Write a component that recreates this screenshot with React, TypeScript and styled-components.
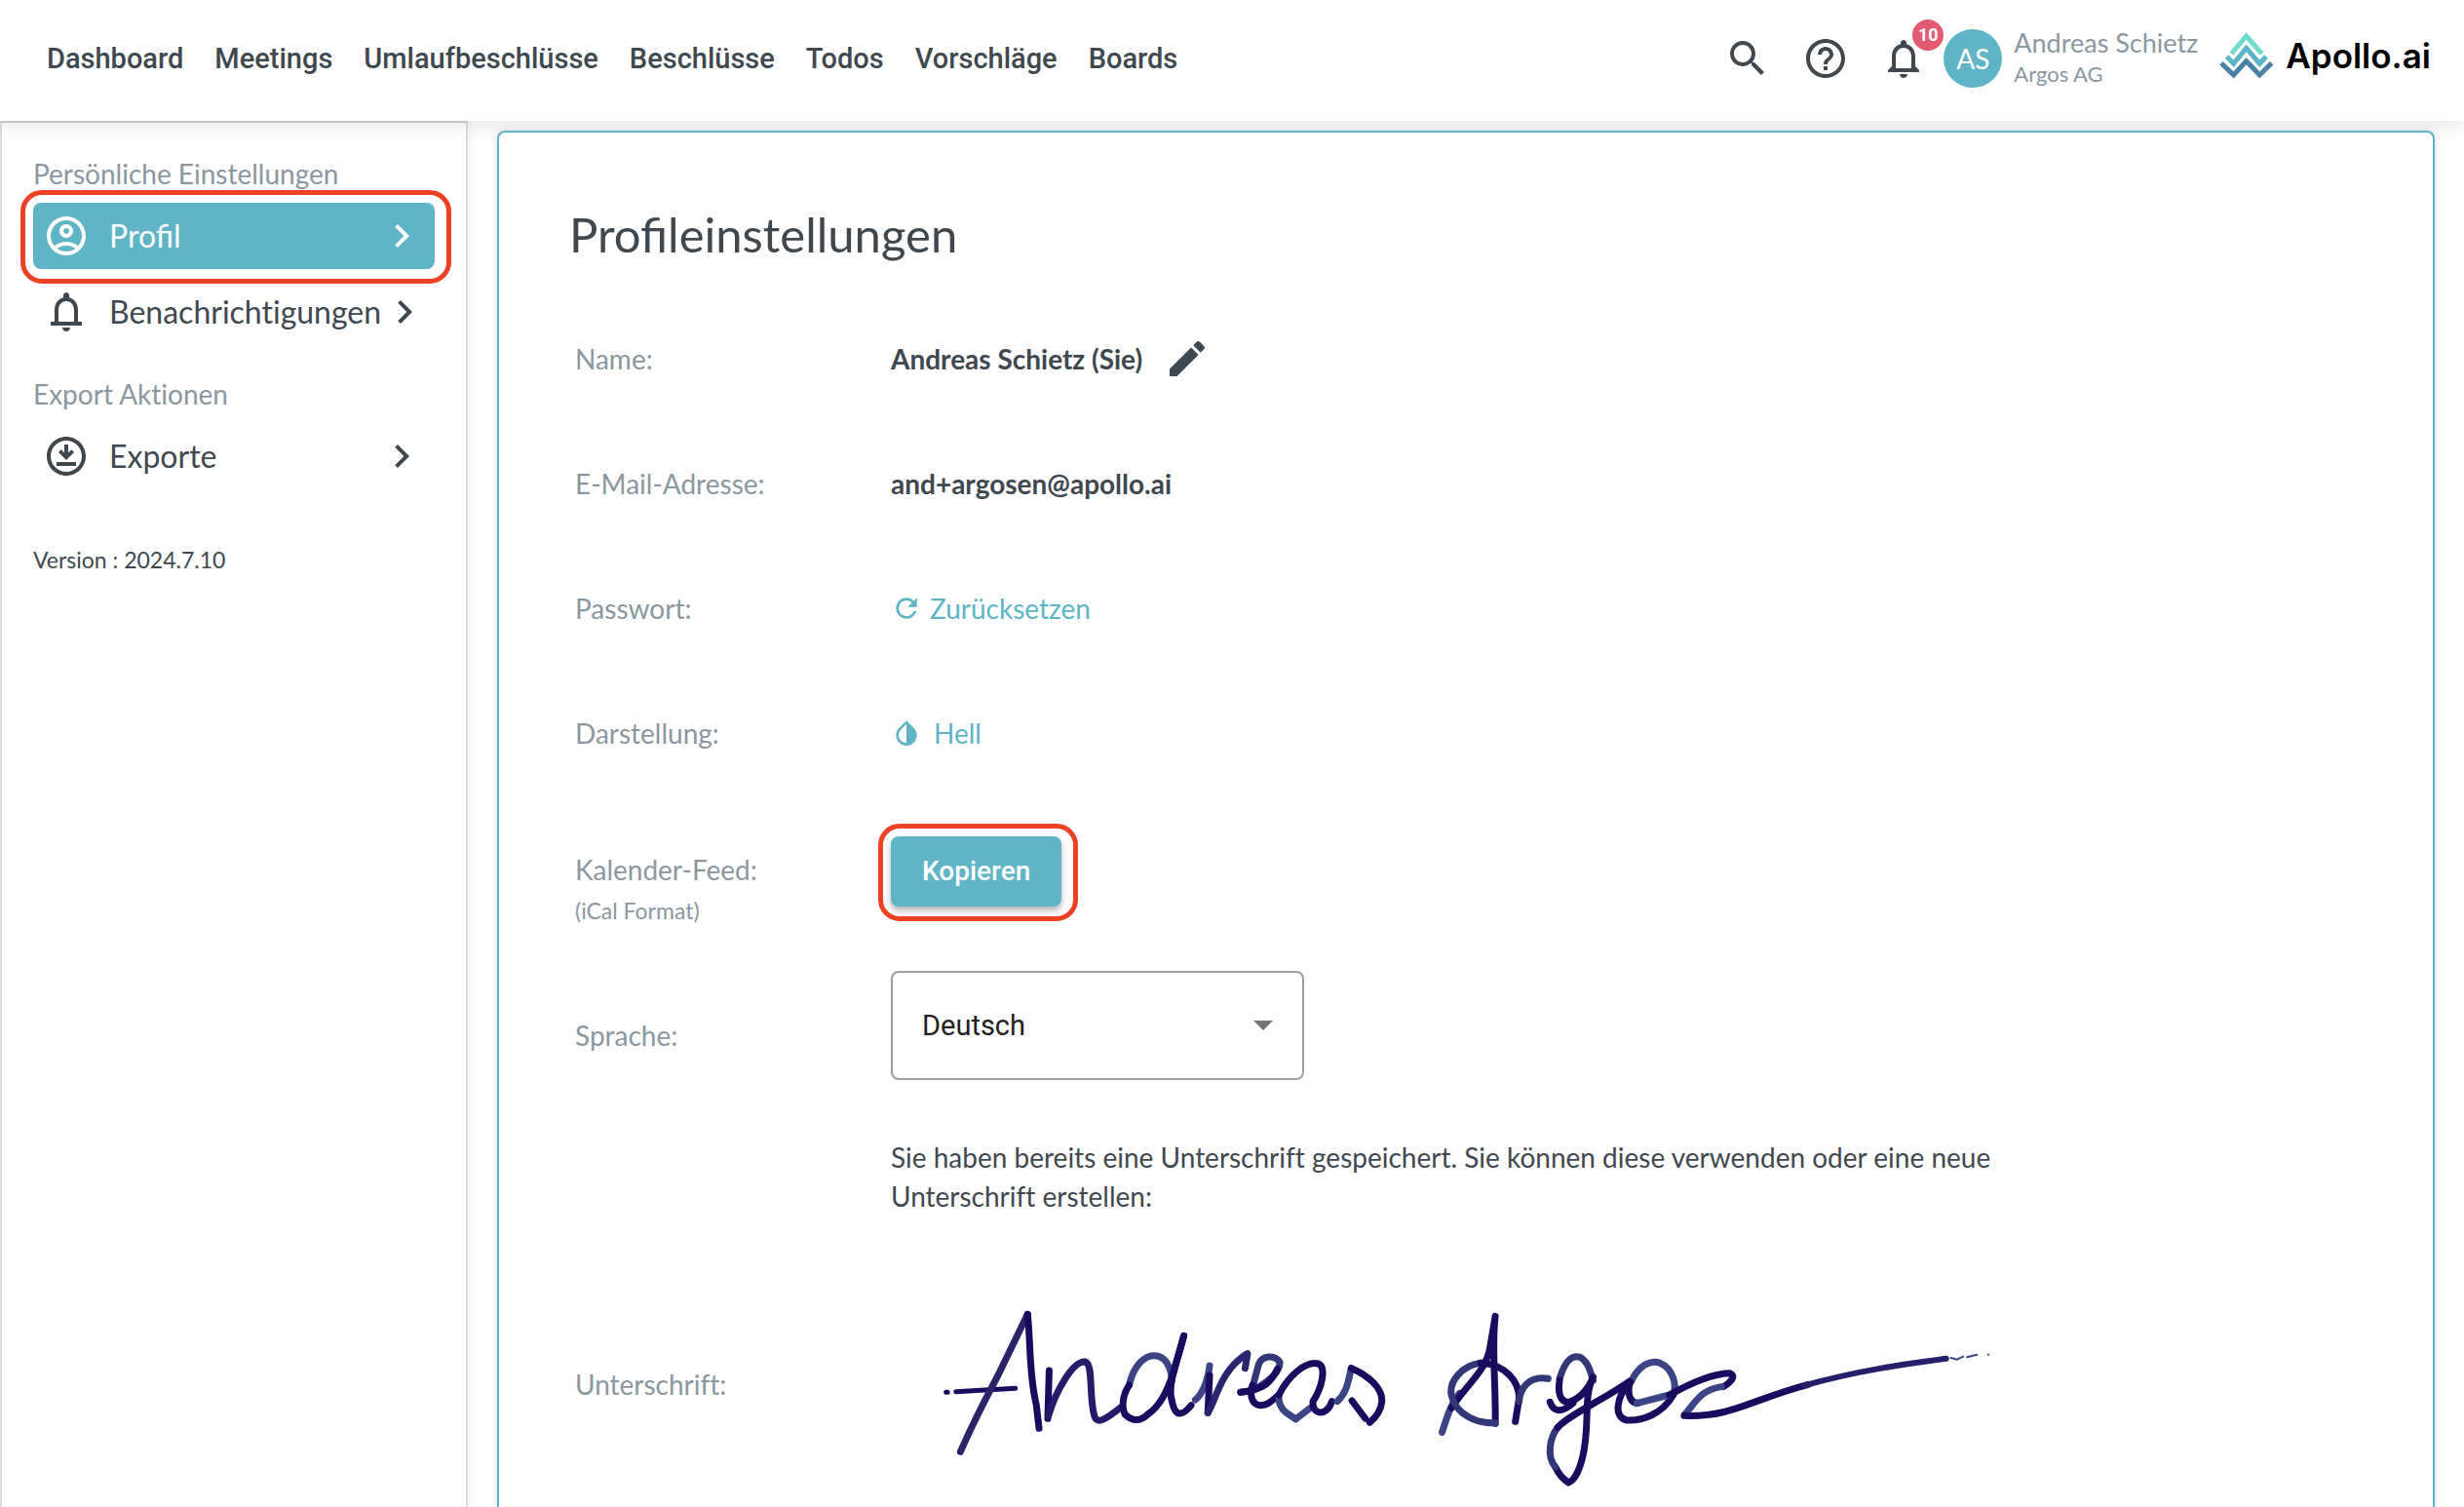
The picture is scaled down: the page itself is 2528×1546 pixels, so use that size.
import React from 'react';
import styled, { createGlobalStyle, css } from 'styled-components';

const color = {
  text: '#40484f',
  muted: '#8a979f',
  teal: '#5fb5c6',
  mark: '#ec4125',
  badge: '#e25b70',
  line: '#dddddd',
};

const lato = `Lato, "Open Sans", sans-serif`;
const roboto = `Roboto, "Noto Sans", sans-serif`;

const GlobalStyle = createGlobalStyle`
  *, *::before, *::after { box-sizing: border-box; }
  body {
    margin: 0;
    background: #fff;
    color: ${color.text};
    font: 28px/40px ${lato};
    font-variant-ligatures: no-common-ligatures;
  }
  button, select { font: inherit; color: inherit; }
  button { padding: 0; border: 0; background: none; cursor: pointer; }
  a { color: inherit; text-decoration: none; }
`;

const Shell = styled.div`
  display: flex;
  flex-direction: column;
  height: 100vh;
  overflow: hidden;
`;

const Header = styled.header`
  position: relative;
  z-index: 1;
  display: flex;
  align-items: center;
  justify-content: space-between;
  flex: none;
  height: 124px;
  padding: 0 34px 4px 48px;
  background: #fff;
  box-shadow: 0 2px 20px rgba(0, 0, 0, 0.13);
`;

const Nav = styled.nav`
  display: flex;
  gap: 32px;
  font-family: ${roboto};
  font-size: 29px;
  font-weight: 500;
`;

const Tools = styled.div`
  display: flex;
  align-items: center;
`;

const ToolButtons = styled.div`
  display: flex;
  gap: 32px;
  margin-right: 17px;
`;

const ToolButton = styled.button`
  position: relative;
  display: flex;
`;

const Badge = styled.span`
  position: absolute;
  top: -16px;
  right: -17px;
  width: 32px;
  border-radius: 50%;
  background: ${color.badge};
  color: #fff;
  font: 700 18px/32px ${roboto};
  text-align: center;
`;

const Account = styled.button`
  display: flex;
  align-items: center;
  gap: 12px;
  color: ${color.muted};
  text-align: left;
`;

const Avatar = styled.span`
  width: 60px;
  border-radius: 50%;
  background: ${color.teal};
  color: #fff;
  line-height: 60px;
  text-align: center;
`;

const Person = styled.span`
  display: flex;
  flex-direction: column;
  font-size: 27px;
  line-height: 32px;
`;

const Company = styled.span`
  font-size: 22px;
`;

const Brand = styled.a`
  display: flex;
  align-items: center;
  gap: 12px;
  margin: 0 0 6px 22px;
  color: #000;
  font: 600 35px/44px Inter, sans-serif;
`;

const Body = styled.div`
  display: flex;
  flex: 1;
  min-height: 0;
`;

const Sidebar = styled.aside`
  flex: none;
  width: 480px;
  padding: 32px;
  border: 2px solid ${color.line};
  border-top-color: #d0d0d0;
  border-bottom: 0;
  box-shadow: 0 0 12px rgba(0, 0, 0, 0.08);
`;

const SectionLabel = styled.h2`
  margin: 0 0 10px;
  color: ${color.muted};
  font-size: 28px;
  font-weight: 400;
`;

const Menu = styled.ul`
  display: flex;
  flex-direction: column;
  gap: 10px;
  width: 412px;
  margin: 0 0 30px;
  padding: 0;
  list-style: none;
`;

const marked = css`
  position: relative;
  &::after {
    content: '';
    position: absolute;
    inset: -13px -17px -15px -13px;
    border: 5px solid ${color.mark};
    border-radius: 22px;
    pointer-events: none;
  }
`;

const MenuLink = styled.a<{ $active?: boolean }>`
  display: flex;
  align-items: center;
  height: 68px;
  padding: 0 10px;
  border-radius: 8px;
  font-size: 32px;
  white-space: nowrap;
  svg { flex: none; }
  ${(p) => p.$active && css`
    background: ${color.teal};
    color: #fff;
    font-variant-ligatures: normal;
    ${marked}
  `}
`;

const MenuText = styled.span`
  flex: 1 0 auto;
  margin-left: 20px;
`;

const Version = styled.p`
  margin: 52px 0 0;
  font-size: 23px;
`;

const Main = styled.main`
  flex: 1;
  min-width: 0;
  padding: 10px 30px;
  overflow-y: auto;
  scrollbar-width: none;
`;

const Card = styled.section`
  position: relative;
  z-index: 2;
  padding: 74px 72px 80px;
  border: 2px solid ${color.teal};
  border-radius: 8px;
  background: #fff;
  box-shadow: 0 0 10px rgba(0, 0, 0, 0.12);
`;

const Title = styled.h1`
  margin: 0 0 34px;
  font-size: 49px;
  font-weight: 400;
  font-variant-ligatures: normal;
  line-height: 60px;
`;

const Fields = styled.div`
  padding-left: 6px;
`;

const Row = styled.div<{ $height?: number }>`
  display: grid;
  grid-template-columns: 324px 1fr;
  align-items: center;
  min-height: ${(p) => p.$height ?? 128}px;
`;

const Label = styled.label<{ $padding?: string }>`
  display: flex;
  flex-direction: column;
  padding: ${(p) => p.$padding ?? 0};
  color: ${color.muted};
`;

const Hint = styled.span`
  margin-bottom: -40px;
  font-size: 23px;
  line-height: 44px;
`;

const Value = styled.div`
  display: flex;
  align-items: center;
  gap: 22px;
  font-weight: 700;
`;

const IconButton = styled.button`
  display: flex;
`;

const Action = styled.button<{ $gap: number }>`
  display: flex;
  align-items: center;
  gap: ${(p) => p.$gap}px;
  color: ${color.teal};
`;

const CopyButton = styled.button`
  ${marked}
  height: 72px;
  padding: 0 32px;
  border-radius: 8px;
  background: ${color.teal};
  color: #fff;
  font-family: ${roboto};
  font-weight: 500;
  box-shadow: 0 4px 6px rgba(0, 0, 0, 0.3);
`;

const SelectBox = styled.div`
  position: relative;
  width: 424px;
`;

const Select = styled.select`
  appearance: none;
  display: block;
  width: 100%;
  height: 112px;
  padding: 0 72px 0 30px;
  border: 2px solid #9e9e9e;
  border-radius: 8px;
  background: #fff;
  color: #212121;
  font-family: ${roboto};
  font-size: 29px;
`;

const Caret = styled.span`
  position: absolute;
  top: 51px;
  right: 32px;
  border: 10px solid transparent;
  border-top-color: #757575;
  border-bottom: 0;
  pointer-events: none;
`;

const Note = styled.p`
  max-width: 1160px;
  margin: 35px 0 74px 324px;
`;

const Signature = styled.svg`
  display: block;
  margin-left: 26px;
  fill: none;
  stroke: #190b5e;
  stroke-width: 7px;
  stroke-linecap: round;
  stroke-linejoin: round;
  path { vector-effect: non-scaling-stroke; }
`;

const icons = {
  search: 'M15.5 14h-.79l-.28-.27C15.41 12.59 16 11.11 16 9.5 16 5.91 13.09 3 9.5 3S3 5.91 3 9.5 5.91 16 9.5 16c1.61 0 3.09-.59 4.23-1.57l.27.28v.79l5 4.99L20.49 19l-4.99-5zm-6 0C7.01 14 5 11.99 5 9.5S7.01 5 9.5 5 14 7.01 14 9.5 11.99 14 9.5 14z',
  help: 'M11 18h2v-2h-2v2zm1-16C6.48 2 2 6.48 2 12s4.48 10 10 10 10-4.48 10-10S17.52 2 12 2zm0 18c-4.41 0-8-3.59-8-8s3.59-8 8-8 8 3.59 8 8-3.59 8-8 8zm0-14c-2.21 0-4 1.79-4 4h2c0-1.1.9-2 2-2s2 .9 2 2c0 2-3 1.75-3 5h2c0-2.25 3-2.5 3-5 0-2.21-1.79-4-4-4z',
  bell: 'M12 22c1.1 0 2-.9 2-2h-4c0 1.1.9 2 2 2zm6-6v-5c0-3.07-1.63-5.64-4.5-6.32V4c0-.83-.67-1.5-1.5-1.5s-1.5.67-1.5 1.5v.68C7.64 5.36 6 7.92 6 11v5l-2 2v1h16v-1l-2-2zm-2 1H8v-6c0-2.48 1.51-4.5 4-4.5s4 2.02 4 4.5v6z',
  bellFlat: 'M18 17v-6c0-3.07-1.63-5.64-4.5-6.32V3.5C13.5 2.67 12.83 2 12 2s-1.5.67-1.5 1.5v1.18C7.64 5.36 6 7.92 6 11v6H4v2h16v-2h-2zm-2 0H8v-6c0-2.48 1.51-4.5 4-4.5s4 2.02 4 4.5v6zm-4 5c1.1 0 2-.9 2-2h-4c0 1.1.89 2 2 2z',
  user: 'M12 2C6.48 2 2 6.48 2 12s4.48 10 10 10 10-4.48 10-10S17.52 2 12 2zM7.35 18.5C8.66 17.56 10.26 17 12 17s3.34.56 4.65 1.5C15.34 19.44 13.74 20 12 20s-3.34-.56-4.65-1.5zm10.79-1.38C16.45 15.8 14.32 15 12 15s-4.45.8-6.14 2.12C4.7 15.73 4 13.95 4 12c0-4.42 3.58-8 8-8s8 3.58 8 8c0 1.95-.7 3.73-1.86 5.12zM12 6c-1.93 0-3.5 1.57-3.5 3.5S10.07 13 12 13s3.5-1.57 3.5-3.5S13.93 6 12 6zm0 5c-.83 0-1.5-.67-1.5-1.5S11.17 8 12 8s1.5.67 1.5 1.5S12.83 11 12 11z',
  download: 'M12 2C6.48 2 2 6.48 2 12s4.48 10 10 10 10-4.48 10-10S17.52 2 12 2zm0 18c-4.41 0-8-3.59-8-8s3.59-8 8-8 8 3.59 8 8-3.59 8-8 8zM7 15h10v2H7zM12 14l-4-4 1.4-1.4 1.6 1.6V6h2v4.2l1.6-1.6L16 10z',
  chevron: 'M10 6L8.59 7.41 13.17 12l-4.58 4.59L10 18l6-6z',
  pencil: 'M3 17.25V21h3.75L17.81 9.94l-3.75-3.75L3 17.25zM20.71 7.04c.39-.39.39-1.02 0-1.41l-2.34-2.34c-.39-.39-1.02-.39-1.41 0l-1.83 1.83 3.75 3.75 1.83-1.83z',
  refresh: 'M17.65 6.35C16.2 4.9 14.21 4 12 4c-4.42 0-7.99 3.58-7.99 8s3.57 8 7.99 8c3.73 0 6.84-2.55 7.73-6h-2.08c-.82 2.33-3.04 4-5.65 4-3.31 0-6-2.69-6-6s2.69-6 6-6c1.66 0 3.14.69 4.22 1.78L13 11h7V4l-2.35 2.35z',
  drop: 'M17.66 8L12 2.35 6.34 8C4.78 9.56 4 11.64 4 13.64s.78 4.11 2.34 5.67 3.61 2.35 5.66 2.35 4.1-.79 5.66-2.35S20 15.64 20 13.64 19.22 9.56 17.66 8zM12 19.59c-1.6 0-3.11-.62-4.24-1.76C6.62 16.69 6 15.24 6 13.64s.62-3.1 1.76-4.24L12 5.1v14.49z',
};

const Icon = ({ name, size = 48 }: { name: keyof typeof icons; size?: number }) => (
  <svg width={size} height={size} viewBox="0 0 24 24" fill="currentColor" aria-hidden="true">
    <path d={icons[name]} />
  </svg>
);

const Logo = () => (
  <svg width="56" height="48" viewBox="63 71 168 144" fill="none" strokeWidth="15" aria-hidden="true">
    <path stroke="#6edcca" d="M100 137L146 83l48 54" />
    <path stroke="#5bb4c7" d="M86 146l21 22 39-48 41 48 20-22" />
    <path stroke="#4980a6" d="M69 166l38 37 39-43 41 43 37-37" />
  </svg>
);

const navItems = ['Dashboard', 'Meetings', 'Umlaufbeschlüsse', 'Beschlüsse', 'Todos', 'Vorschläge', 'Boards'];

type MenuEntry = { icon: keyof typeof icons; text: string; active?: boolean };

const SideMenu = ({ title, items }: { title: string; items: MenuEntry[] }) => (
  <>
    <SectionLabel>{title}</SectionLabel>
    <Menu>
      {items.map((item) => (
        <li key={item.text}>
          <MenuLink href="#" $active={item.active}>
            <Icon name={item.icon} />
            <MenuText>{item.text}</MenuText>
            <Icon name="chevron" />
          </MenuLink>
        </li>
      ))}
    </Menu>
  </>
);

const SignatureDrawing = () => (
  <Signature width="1120" height="226" viewBox="0 0 1120 226" role="img" aria-label="Andreas Argos">
    <g transform="scale(.3571 .3333)">
      <path d="M86 322L90 322M114 320L285 310" strokeWidth="5" />
      <path d="M320 82L235 270Q170 400 127 505" stroke="#2a2568" />
      <path d="M320 82C330 180 323 260 345 360L353 433" />
      <path d="M382 255L378 403" />
      <path d="M380 395C400 320 450 225 485 228C510 235 495 330 512 395C520 425 550 400 588 368" stroke="#241c68" />
      <path d="M735 285C730 220 700 205 675 210C640 220 620 260 612 300" stroke="#3b4585" />
      <path d="M612 300C592 330 590 370 600 390C620 412 645 412 665 390C700 365 720 320 738 265L769 148" />
      <path d="M769 148C750 230 720 300 735 350C745 400 765 395 790 362" />
      <path d="M802 345C820 330 838 290 843 240" stroke="#3b4585" />
      <path d="M843 270L838 385" />
      <path d="M838 385C860 350 875 250 952 203L945 248" stroke="#29266f" />
      <path d="M932 322C985 320 1045 265 1045 230C1030 205 995 208 984 235L968 300" stroke="#323778" />
      <path d="M932 322C1000 315 1020 290 1038 250M966 300C955 340 970 362 990 362C1010 362 1020 350 1042 330" />
      <path d="M1042 335C1040 380 1075 390 1090 405L1130 372" stroke="#3b4585" />
      <path d="M1042 330C1070 270 1120 225 1155 234C1180 245 1165 310 1140 350C1135 390 1180 400 1194 350" />
      <path d="M1210 350C1240 320 1242 280 1250 248" stroke="#3b4585" />
      <path d="M1250 248C1300 270 1340 310 1338 350C1335 380 1320 400 1303 415M1252 348L1290 402" />
    </g>
    <g transform="translate(500 0) scale(.3954 .3333)">
      <path d="M100 445C120 370 125 360 145 325" stroke="#3b4585" />
      <path d="M125 370C160 300 215 260 225 180L238 88C228 180 240 300 238 418" />
      <path d="M238 416C190 420 135 390 124 330C118 290 150 240 200 232" stroke="#323778" />
      <path d="M200 232C265 235 300 290 300 340L290 412" />
      <path d="M300 350C302 310 325 270 375 280" stroke="#323778" />
      <path d="M405 280C420 220 440 205 460 215C480 230 485 260 492 285" stroke="#323778" />
      <path d="M405 285C400 320 405 355 430 352C460 340 480 310 492 275C465 340 485 420 465 520C455 570 440 595 428 600C415 590 403 575 394 552" />
      <path d="M380 352C390 385 410 385 440 355" />
      <path d="M394 552C370 520 380 460 400 430" stroke="#323778" />
      <path d="M400 430C430 390 520 345 588 287" />
      <path d="M590 290C610 240 640 220 665 232C700 250 710 300 700 330" stroke="#3b4585" />
      <path d="M700 330C670 390 620 410 580 408C545 400 550 340 588 290M588 290C578 330 590 357 610 355" />
      <path d="M605 356L690 330" stroke="#3b4585" />
      <path d="M690 330C750 290 800 265 845 263C865 270 850 290 830 305" />
      <path d="M825 305C770 315 760 350 730 390" stroke="#3b4585" />
      <path d="M728 394C850 400 900 345 1050 298" />
      <path d="M1040 301C1180 255 1300 235 1408 218" stroke="#252069" strokeWidth="6" />
      <path d="M1420 216L1436 221 1452 212M1462 214L1488 206M1517 206L1518 206" stroke="#3b4585" strokeWidth="2" />
    </g>
  </Signature>
);

export default function App() {
  return (
    <Shell>
      <GlobalStyle />
      <Header>
        <Nav>{navItems.map((item) => <a href="#" key={item}>{item}</a>)}</Nav>
        <Tools>
          <ToolButtons>
            <ToolButton aria-label="Suche"><Icon name="search" /></ToolButton>
            <ToolButton aria-label="Hilfe"><Icon name="help" /></ToolButton>
            <ToolButton aria-label="Mitteilungen"><Icon name="bell" /><Badge>10</Badge></ToolButton>
          </ToolButtons>
          <Account>
            <Avatar>AS</Avatar>
            <Person>Andreas Schietz<Company>Argos AG</Company></Person>
          </Account>
          <Brand href="#"><Logo />Apollo.ai</Brand>
        </Tools>
      </Header>
      <Body>
        <Sidebar>
          <SideMenu
            title="Persönliche Einstellungen"
            items={[{ icon: 'user', text: 'Profil', active: true }, { icon: 'bellFlat', text: 'Benachrichtigungen' }]}
          />
          <SideMenu title="Export Aktionen" items={[{ icon: 'download', text: 'Exporte' }]} />
          <Version>Version : 2024.7.10</Version>
        </Sidebar>
        <Main>
          <Card>
            <Title>Profileinstellungen</Title>
            <Fields>
              <Row>
                <Label as="span">Name:</Label>
                <Value>
                  Andreas Schietz (Sie)
                  <IconButton aria-label="Name bearbeiten"><Icon name="pencil" /></IconButton>
                </Value>
              </Row>
              <Row>
                <Label as="span">E-Mail-Adresse:</Label>
                <Value>and+argosen@apollo.ai</Value>
              </Row>
              <Row>
                <Label htmlFor="reset">Passwort:</Label>
                <div><Action id="reset" $gap={8}><Icon name="refresh" size={32} />Zurücksetzen</Action></div>
              </Row>
              <Row>
                <Label htmlFor="theme">Darstellung:</Label>
                <div><Action id="theme" $gap={12}><Icon name="drop" size={32} />Hell</Action></div>
              </Row>
              <Row $height={156}>
                <Label htmlFor="copy">Kalender-Feed:<Hint>(iCal Format)</Hint></Label>
                <div><CopyButton id="copy">Kopieren</CopyButton></div>
              </Row>
              <Row $height={160}>
                <Label htmlFor="language" $padding="20px 0 0">Sprache:</Label>
                <SelectBox>
                  <Select id="language" defaultValue="de">
                    <option value="de">Deutsch</option>
                    <option value="en">English</option>
                  </Select>
                  <Caret />
                </SelectBox>
              </Row>
              <Note>
                Sie haben bereits eine Unterschrift gespeichert. Sie können diese verwenden oder eine neue Unterschrift erstellen:
              </Note>
              <Row $height={226}>
                <Label as="span" $padding="0 0 28px">Unterschrift:</Label>
                <SignatureDrawing />
              </Row>
            </Fields>
          </Card>
        </Main>
      </Body>
    </Shell>
  );
}
